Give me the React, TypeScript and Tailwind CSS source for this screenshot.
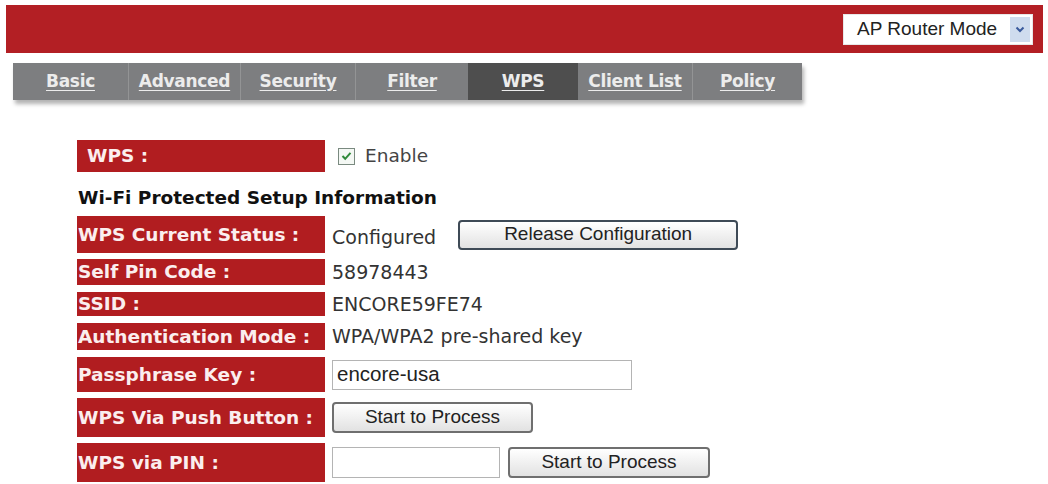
import React from 'react'

const tabs = [
  { name: 'Basic', w: 'w-[115px]' },
  { name: 'Advanced', w: 'w-[112px]' },
  { name: 'Security', w: 'w-[115px]' },
  { name: 'Filter', w: 'w-[113px]' },
  { name: 'WPS', w: 'w-[110px]', active: true },
  { name: 'Client List', w: 'w-[114px]' },
  { name: 'Policy', w: 'w-[110px]' },
]

function Label({ children, indent }: { children: React.ReactNode; indent?: boolean }) {
  return (
    <div
      className={`flex h-full w-[248px] shrink-0 items-center bg-[#b11d20] text-[18.5px] font-bold text-[#fbeeee] ${
        indent ? 'pl-[10px]' : 'pl-[1px]'
      }`}
    >
      {children}
    </div>
  )
}

function Btn({ children, className }: { children: React.ReactNode; className: string }) {
  return (
    <button
      className={`flex items-center justify-center rounded-[4px] border-2 bg-gradient-to-b from-white to-[#e2e2e2] font-['Liberation_Sans',Arial,sans-serif] text-[19px] text-[#222] ${className}`}
    >
      {children}
    </button>
  )
}

export default function App() {
  return (
    <div className="relative h-[484px] w-[1048px] overflow-hidden bg-white font-['DejaVu_Sans',Verdana,sans-serif]">
      {/* top bar */}
      <div className="ml-[6px] mt-[5px] flex h-[48px] w-[1037px] items-center justify-end bg-[#b31f24] pr-[10px]">
        <div className="flex h-[31px] w-[190px] items-center justify-between border border-[#e8e8e8] bg-white pl-[13px] pr-[2px]">
          <span className="font-['Liberation_Sans',Arial,sans-serif] text-[19px] text-[#222]">
            AP Router Mode
          </span>
          <span className="flex h-[25px] w-[20px] items-center justify-center bg-[#cfdcee]">
            <svg width="10" height="7" viewBox="0 0 10 7">
              <path d="M1.5 1.5 L5 5 L8.5 1.5" fill="none" stroke="#3a5a9c" strokeWidth="2" />
            </svg>
          </span>
        </div>
      </div>

      {/* tabs */}
      <div className="ml-[13px] mt-[10px] flex h-[37px] w-[789px] bg-[#7d7e80] shadow-[2px_4px_4px_rgba(0,0,0,0.3)]">
        {tabs.map((t, i) => (
          <div
            key={t.name}
            className={`flex h-full items-center justify-center ${t.w} ${
              t.active ? 'bg-[#4e4e4e]' : ''
            } ${i > 0 && !t.active && !tabs[i - 1].active ? 'border-l border-[#939495]' : ''}`}
          >
            <span className="text-[17px] font-bold tracking-[-0.3px] text-[#ececec] underline underline-offset-[3px]">
              {t.name}
            </span>
          </div>
        ))}
      </div>

      {/* form */}
      <div className="ml-[77px] mt-[40px] flex flex-col text-[19px] text-[#333]">
        <div className="flex h-[32px] items-center">
          <Label indent>WPS :</Label>
          <div className="ml-[13px] flex items-center gap-[10px] text-[18.5px] text-[#444]">
            <span className="flex h-[17px] w-[17px] items-center justify-center border border-[#7a8a80] bg-[#f4f8f4]">
              <svg width="11" height="10" viewBox="0 0 11 10">
                <path d="M1.5 5 L4.2 7.8 L9.5 1.8" fill="none" stroke="#2f8a3a" strokeWidth="2" />
              </svg>
            </span>
            Enable
          </div>
        </div>

        <div className="flex h-[44px] items-center pl-[1px] pt-[8px] text-[18.5px] font-bold text-[#111]">
          Wi-Fi Protected Setup Information
        </div>

        <div className="flex h-[37px] items-center">
          <Label>WPS Current Status :</Label>
          <span className="ml-[7px] mt-[6px]">Configured</span>
          <Btn className="ml-[22px] h-[30px] w-[280px] border-[#3e4a56]">Release Configuration</Btn>
        </div>

        <div className="mt-[6px] flex h-[26px] items-center">
          <Label>Self Pin Code :</Label>
          <span className="ml-[7px]">58978443</span>
        </div>

        <div className="mt-[7px] flex h-[24px] items-center">
          <Label>SSID :</Label>
          <span className="ml-[7px]">ENCORE59FE74</span>
        </div>

        <div className="mt-[7px] flex h-[27px] items-center">
          <Label>Authentication Mode :</Label>
          <span className="ml-[7px]">WPA/WPA2 pre-shared key</span>
        </div>

        <div className="mt-[7px] flex h-[35px] items-center">
          <Label>Passphrase Key :</Label>
          <div className="ml-[7px] flex h-[30px] w-[300px] items-center border border-[#b4b4b4] bg-white pl-[4px] font-['Liberation_Sans',Arial,sans-serif] text-[20.5px] text-[#222]">
            encore-usa
          </div>
        </div>

        <div className="mt-[6px] flex h-[39px] items-center">
          <Label>WPS Via Push Button :</Label>
          <Btn className="ml-[7px] h-[31px] w-[201px] border-[#6f6f6f]">Start to Process</Btn>
        </div>

        <div className="mt-[6px] flex h-[39px] items-center">
          <Label>WPS via PIN :</Label>
          <div className="ml-[7px] h-[31px] w-[168px] border border-[#b4b4b4] bg-white" />
          <Btn className="ml-[8px] h-[31px] w-[202px] border-[#6f6f6f]">Start to Process</Btn>
        </div>
      </div>
    </div>
  )
}
